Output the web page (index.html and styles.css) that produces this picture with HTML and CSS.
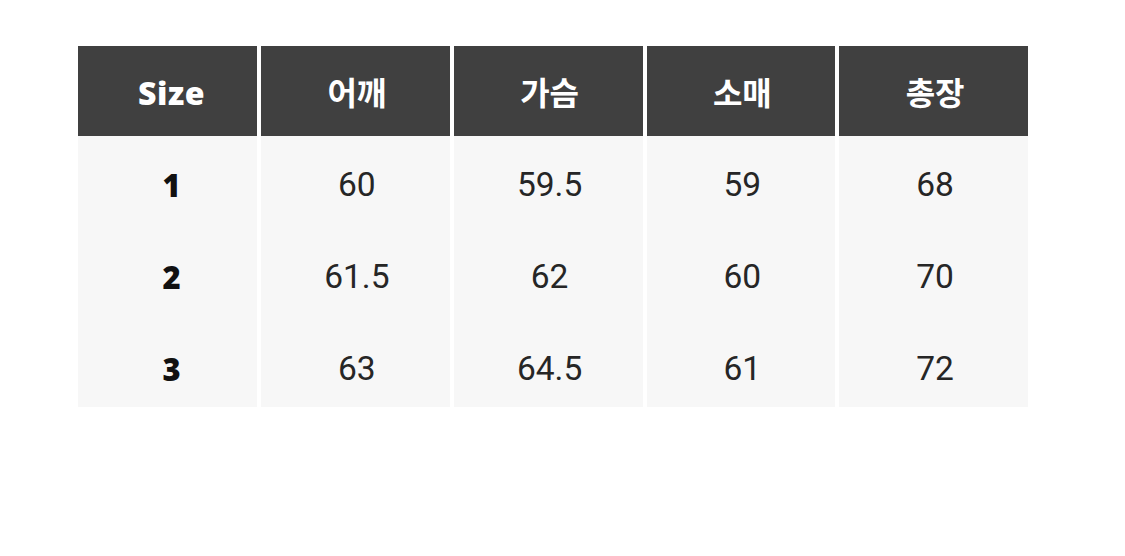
FILE: index.html
```html
<!DOCTYPE html>
<html lang="ko">
<head>
<meta charset="utf-8">
<title>Size</title>
<link rel="stylesheet" href="styles.css">
</head>
<body>
<div class="size-table">
  <div class="cell head latin">Size</div>
  <div class="cell head">어깨</div>
  <div class="cell head">가슴</div>
  <div class="cell head">소매</div>
  <div class="cell head">총장</div>

  <div class="cell body first">1</div>
  <div class="cell body">60</div>
  <div class="cell body">59.5</div>
  <div class="cell body">59</div>
  <div class="cell body">68</div>

  <div class="cell body first">2</div>
  <div class="cell body">61.5</div>
  <div class="cell body">62</div>
  <div class="cell body">60</div>
  <div class="cell body">70</div>

  <div class="cell body first">3</div>
  <div class="cell body">63</div>
  <div class="cell body">64.5</div>
  <div class="cell body">61</div>
  <div class="cell body">72</div>
</div>
</body>
</html>
```

FILE: styles.css
```css
html, body {
  margin: 0;
  padding: 0;
  background: #ffffff;
}

body {
  font-family: Roboto, "Noto Sans CJK KR", sans-serif;
}

.size-table {
  margin: 46px 0 0 78px;
  width: 950px;
  display: grid;
  grid-template-columns: 179px repeat(4, 1fr);
  grid-template-rows: 90px 92px 92px 87px;
  column-gap: 4px;
}

.cell {
  display: flex;
  justify-content: center;
  box-sizing: border-box;
  padding-left: 3px;
}

.head {
  background: #404040;
  color: #ffffff;
  font-family: "Noto Sans CJK KR", sans-serif;
  font-weight: 700;
  font-size: 32px;
  align-items: center;
}

.head.latin {
  font-family: "Open Sans", "Noto Sans CJK KR", sans-serif;
  font-weight: 800;
  font-size: 32px;
  letter-spacing: 0.5px;
  padding-left: 8px;
  padding-top: 2px;
}

.body {
  background: #f7f7f7;
  color: #262626;
  font-family: Roboto, sans-serif;
  font-size: 33.5px;
  font-weight: 400;
  align-items: flex-start;
  line-height: 40px;
  padding-top: 29px;
}

.body.first {
  font-family: "Open Sans", sans-serif;
  font-weight: 800;
  color: #111111;
  font-size: 31px;
  padding-left: 8px;
}
```
